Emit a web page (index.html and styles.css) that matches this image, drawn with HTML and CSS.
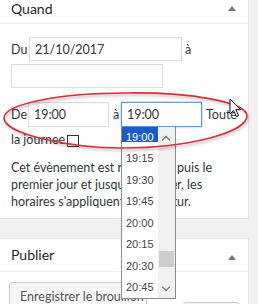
FILE: index.html
```html
<!DOCTYPE html>
<html>
<head>
<title>Quand</title>
<link rel="stylesheet" href="styles.css">
</head>
<body>
<div class="postbox">
  <div class="hndle">
    <h2>Quand</h2>
    <span class="toggle"></span>
  </div>
  <div class="inside">
    <div class="row">
      <span class="lbl lbl-du">Du</span>
      <input class="field date-start" type="text" value="21/10/2017">
      <span class="lbl lbl-a1">à</span>
    </div>
    <div class="row">
      <input class="field date-end" type="text" value="">
    </div>
    <div class="row times">
      <span class="lbl lbl-de">De</span>
      <input class="field time" type="text" value="19:00">
      <span class="lbl lbl-a2">à</span>
      <span class="time-wrap">
        <input class="field time focus" type="text" value="19:00">
        <div class="listbox">
          <div class="options">
            <div class="opt first"><span>19:00</span></div>
            <div class="opt">19:15</div>
            <div class="opt">19:30</div>
            <div class="opt">19:45</div>
            <div class="opt">20:00</div>
            <div class="opt">20:15</div>
            <div class="opt">20:30</div>
            <div class="opt">20:45</div>
          </div>
          <div class="scrollbar">
            <span class="arrow up"></span>
            <span class="thumb"></span>
            <span class="arrow down"></span>
          </div>
        </div>
      </span>
      <span class="lbl lbl-toute">Toute</span>
    </div>
    <div class="row allday">
      <span class="lbl-day">la journee</span>
      <span class="check"></span>
    </div>
    <p class="note">
      <span class="line"><span class="cut">Cet évènement est répété de</span>puis le</span>
      <span class="line"><span class="cut">premier jour et jusqu'au dernie</span>r, les</span>
      <span class="line"><span class="cut">horaires s'appliquent chaque jo</span>ur.</span>
    </p>
  </div>
  <svg class="circle" width="258" height="70" viewBox="0 0 258 70">
    <path class="shade" d="M126 5 C 60 5, 4 16, 4 30 C 4 46, 70 60, 122 60 C 190 60, 247 44, 247 28 C 247 14, 190 4, 126 5 Z"/>
    <path class="ink" d="M126 5 C 60 5, 4 16, 4 30 C 4 46, 70 60, 122 60 C 190 60, 247 44, 247 28 C 247 14, 190 4, 126 5 Z"/>
  </svg>
  <svg class="pointer" width="14" height="20" viewBox="0 0 14 20">
    <path d="M1 1 L1 16 L4.5 12.5 L7.5 18.5 L9.5 17.5 L6.8 11.6 L11.5 11.6 Z" fill="#fff" stroke="#111" stroke-width="1"/>
  </svg>
</div>

<div class="postbox publish">
  <div class="hndle">
    <h2>Publier</h2>
    <span class="toggle"></span>
  </div>
  <div class="inside actions">
    <button class="button">Enregistrer le brouillon</button>
    <button class="button preview">Aperçu</button>
  </div>
</div>
</body>
</html>
```

FILE: styles.css
```css
body {
  margin: 0;
  padding: 0;
  width: 258px;
  height: 304px;
  overflow: hidden;
  background-color: #f1f1f1;
  font-family: Lato, "Open Sans", sans-serif;
  font-size: 12.5px;
  color: #32373c;
}

.postbox {
  position: relative;
  width: 248px;
  background-color: #fff;
  border-right: 1px solid #e5e5e5;
  border-bottom: 1px solid #e5e5e5;
}

.hndle {
  display: flex;
  justify-content: space-between;
  align-items: flex-start;
  height: 23px;
  padding: 0 12px 0 11px;
  border-bottom: 1px solid #eee;
}

.hndle h2 {
  margin: 0;
  font-size: 14px;
  font-weight: normal;
  line-height: 17px;
  color: #23282d;
}

.toggle {
  width: 0;
  height: 0;
  margin-top: 6px;
  border-left: 4px solid transparent;
  border-right: 4px solid transparent;
  border-bottom: 5px solid #72777c;
}

.inside {
  padding: 13px 11px 8px;
}

.row {
  display: flex;
  align-items: center;
  line-height: 17px;
  white-space: nowrap;
}

.row + .row {
  margin-top: 3px;
}

.lbl {
  flex: none;
}

.lbl-du {
  width: 18px;
}

.lbl-a1 {
  margin-left: 3px;
}

.lbl-de {
  width: 17px;
}

.lbl-a2 {
  width: 8px;
  padding-left: 4px;
}

.lbl-toute {
  margin-left: 4px;
}

.field {
  box-sizing: border-box;
  flex: none;
  height: 24px;
  margin: 0;
  padding: 0 5px;
  border: 1px solid #ddd;
  background: #fff;
  font-family: Lato, "Open Sans", sans-serif;
  font-size: 12.5px;
  color: #32373c;
  box-shadow: inset 0 1px 2px rgba(0, 0, 0, 0.04);
  outline: none;
}

.date-start {
  width: 153px;
}

.date-end {
  width: 152px;
}

.row.times {
  margin-top: 14px;
  height: 25px;
}

.times .field {
  height: 25px;
}

.field.time {
  width: 81px;
}

.field.focus {
  border-color: #5b9dd9;
  box-shadow: 0 0 2px rgba(30, 140, 190, 0.6);
}

.time-wrap {
  position: relative;
  display: block;
  height: 25px;
}

.listbox {
  position: absolute;
  z-index: 5;
  top: 25px;
  left: 0;
  width: 53px;
  height: 171px;
  display: flex;
  border: 1px solid #8c8c8c;
  border-top: none;
  background: #fff;
  font-family: "Liberation Sans", Arial, sans-serif;
  font-size: 11px;
  color: #444;
  overflow: hidden;
}

.options {
  width: 36px;
}

.opt {
  height: 21.5px;
  line-height: 21.5px;
  padding-left: 4px;
}

.opt.first {
  height: 21px;
  line-height: 20px;
  padding-left: 0;
}

.opt.first span {
  display: block;
  height: 15px;
  line-height: 20px;
  padding-left: 4px;
  background-color: #1c5cc4;
  color: #fff;
}

.scrollbar {
  position: relative;
  width: 17px;
  background-color: #f0f0f0;
}

.arrow {
  position: absolute;
  left: 5px;
  width: 5px;
  height: 5px;
  border-left: 1.5px solid #606060;
  border-top: 1.5px solid #606060;
}

.arrow.up {
  top: 10px;
  transform: rotate(45deg);
}

.arrow.down {
  bottom: 8px;
  transform: rotate(225deg);
}

.thumb {
  position: absolute;
  left: 1px;
  top: 124px;
  width: 15px;
  height: 16px;
  background-color: #cdcdcd;
}

.row.allday {
  margin-top: 4px;
}

.lbl-day {
  flex: none;
  width: 56px;
}

.check {
  box-sizing: border-box;
  flex: none;
  width: 12px;
  height: 12px;
  margin-top: 3px;
  border: 1px solid #333;
  background: #fff;
}

.note {
  margin: 11px 0 0;
  line-height: 17px;
  white-space: nowrap;
}

.note .line {
  display: block;
}

.note .cut {
  display: inline-block;
  width: 166px;
  overflow: hidden;
  vertical-align: top;
}

.circle {
  position: absolute;
  z-index: 6;
  left: 0;
  top: 88px;
  overflow: visible;
}

.circle path {
  fill: none;
}

.circle .ink {
  stroke: #d8303a;
  stroke-width: 1.6;
}

.circle .shade {
  stroke: rgba(0, 0, 0, 0.18);
  stroke-width: 2.5;
  transform: translate(1px, 2px);
  filter: blur(1px);
}

.pointer {
  position: absolute;
  z-index: 7;
  left: 229px;
  top: 98px;
}

.publish {
  margin-top: 19px;
  border-top: 1px solid #e5e5e5;
}

.publish .hndle {
  height: auto;
  padding: 7px 12px 8px 11px;
  align-items: center;
}

.actions {
  display: flex;
  justify-content: space-between;
  padding: 10px 8px 0 9px;
}

.button {
  box-sizing: border-box;
  height: 28px;
  padding: 0 10px;
  border: 1px solid #ccc;
  border-radius: 3px;
  background-color: #f7f7f7;
  box-shadow: 0 1px 0 #ccc;
  font-family: Lato, "Open Sans", sans-serif;
  font-size: 12.5px;
  color: #555;
  white-space: nowrap;
  overflow: hidden;
  text-align: left;
}

.button:first-child {
  width: 138px;
}

.preview {
  width: 57px;
  margin-top: 20px;
}
```
